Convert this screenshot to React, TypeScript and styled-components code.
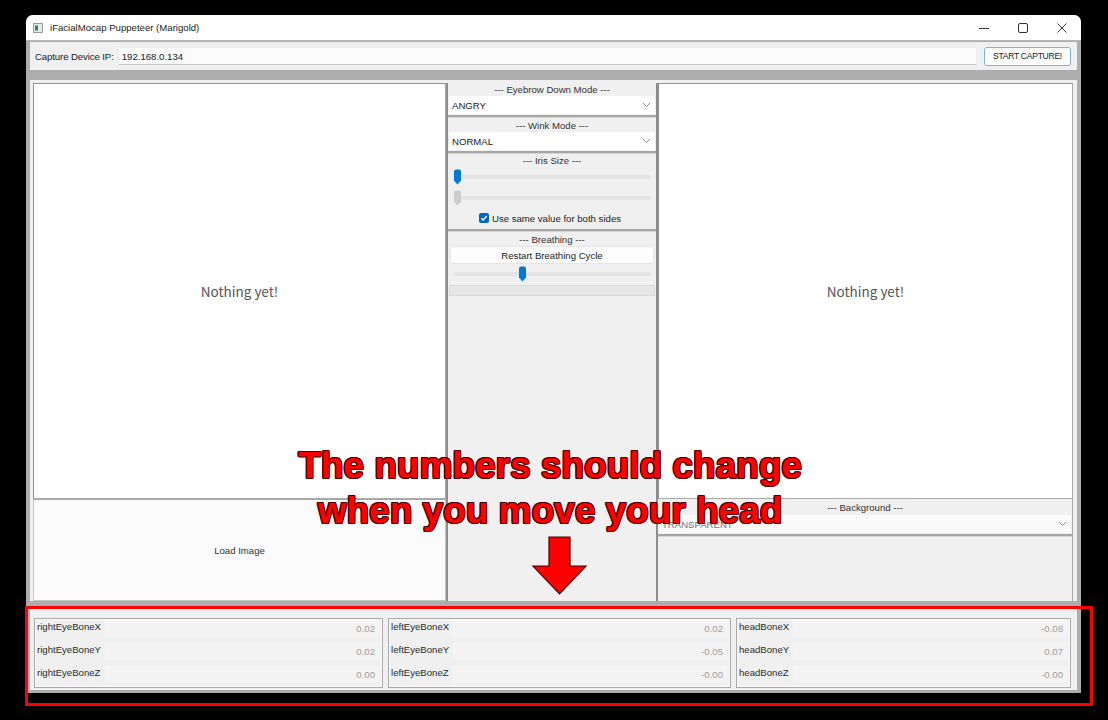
import React from "react";
import styled, { createGlobalStyle } from "styled-components";

const GlobalStyle = createGlobalStyle`
  html, body {
    margin: 0;
    padding: 0;
    background: #000;
  }
  body {
    font-family: "Liberation Sans", Arial, sans-serif;
    font-size: 9.6px;
    color: #222;
  }
  * {
    box-sizing: border-box;
  }
`;

const Page = styled.div`
  position: relative;
  width: 1108px;
  height: 720px;
  overflow: hidden;
  padding: 15px 0 0 26px;
`;

const Window = styled.div`
  width: 1055px;
  height: 678px;
  display: flex;
  flex-direction: column;
  background: #adadad;
  border-radius: 7px 7px 0 0;
  overflow: hidden;
`;

const TitleBar = styled.div`
  height: 26px;
  flex: none;
  display: flex;
  align-items: center;
  background: #fff;
  border-bottom: 1px solid #b8b8b8;
  padding-left: 7px;
`;

const TitleText = styled.span`
  margin-left: 7px;
  color: #1b1b1b;
`;

const Controls = styled.div`
  margin-left: auto;
  display: flex;
  height: 100%;
`;

const ControlButton = styled.div`
  width: 39px;
  height: 100%;
  display: flex;
  align-items: center;
  justify-content: center;
  color: #333;
`;

const Body = styled.div`
  flex: 1;
  display: flex;
  flex-direction: column;
  padding: 1px 4px 3px 4px;
`;

const Toolbar = styled.div`
  height: 28px;
  flex: none;
  display: flex;
  align-items: center;
  background: #f0f0f0;
  padding: 0 6px 0 5px;
`;

const ToolLabel = styled.span`
  color: #222;
  white-space: nowrap;
  letter-spacing: -0.1px;
`;

const IpInput = styled.div`
  flex: 1;
  height: 18px;
  margin-left: 4px;
  display: flex;
  align-items: center;
  padding-left: 3px;
  background: #fbfbfb;
  border: 1px solid #ececec;
  border-bottom-color: #c8c8c8;
  color: #1a1a1a;
`;

const CaptureButton = styled.div`
  width: 87px;
  height: 19px;
  margin-left: 7px;
  display: flex;
  align-items: center;
  justify-content: center;
  background: #fdfdfd;
  border: 1px solid #7fb2e4;
  border-radius: 3px;
  color: #222;
  font-size: 8.6px;
  letter-spacing: -0.3px;
`;

const Main = styled.div`
  margin-top: 10px;
  height: 521px;
  flex: none;
  display: grid;
  grid-template-columns: 413px 212px 1fr;
  grid-template-rows: 416px 1fr;
  background: #f0f0f0;
  padding: 3px 4px 0 3px;
`;

const Canvas = styled.div<{ $col: number }>`
  grid-column: ${(p) => p.$col};
  grid-row: 1;
  background: #fff;
  border: 1px solid #a9a9a9;
  border-top-color: #8f8f8f;
  border-left-color: #8f8f8f;
  display: flex;
  align-items: center;
  justify-content: center;
  font-family: "Noto Sans CJK JP", "Noto Sans", sans-serif;
  font-size: 13.5px;
  color: #555;
`;

const LoadImage = styled.div`
  grid-column: 1;
  grid-row: 2;
  background: #fbfbfb;
  border: 1px solid #c6c6c6;
  border-top-color: #a8a8a8;
  display: flex;
  align-items: center;
  justify-content: center;
  color: #333;
`;

const MiddleColumn = styled.div`
  grid-column: 2;
  grid-row: 1 / 3;
  display: flex;
  flex-direction: column;
  border-left: 2px solid #8d8d8d;
  border-right: 2px solid #8d8d8d;
  background: #f0f0f0;
`;

const BackgroundPanel = styled.div`
  grid-column: 3;
  grid-row: 2;
  display: flex;
  flex-direction: column;
  border-right: 1px solid #a9a9a9;
  background: #f0f0f0;
`;

const SectionHeader = styled.div<{ $h?: number }>`
  height: ${(p) => p.$h ?? 13}px;
  display: flex;
  align-items: center;
  justify-content: center;
  color: #333;
  flex: none;
`;

const Combo = styled.div<{ $light?: boolean }>`
  height: 18px;
  flex: none;
  display: flex;
  align-items: center;
  justify-content: space-between;
  padding: 0 4px 0 3px;
  background: ${(p) => (p.$light ? "#fafafa" : "#fff")};
  color: ${(p) => (p.$light ? "#777" : "#1a1a1a")};
  margin: 0 1px;
`;

const Separator = styled.div`
  height: 3px;
  flex: none;
  margin: 1px 0 0;
  background: #a6a6a6;
  border-bottom: 1px solid #d6d6d6;
`;

const SliderRow = styled.div<{ $h: number }>`
  position: relative;
  height: ${(p) => p.$h}px;
  flex: none;
  display: flex;
  align-items: center;
  padding: 0 5px 0 6px;
`;

const Track = styled.div`
  position: relative;
  flex: 1;
  height: 4px;
  border-radius: 2px;
  background: #e4e4e4;
`;

const Thumb = styled.svg`
  position: absolute;
  top: -6px;
  margin-left: -1px;
`;

const CheckRow = styled.div`
  height: 20px;
  flex: none;
  display: flex;
  align-items: center;
  justify-content: center;
  gap: 3px;
  color: #222;
  padding-right: 4px;
`;

const CheckBox = styled.div`
  width: 10px;
  height: 10px;
  border-radius: 2px;
  background: #0067c0;
  display: flex;
  align-items: center;
  justify-content: center;
`;

const FlatButton = styled.div`
  height: 18px;
  flex: none;
  margin: 0 2px;
  display: flex;
  align-items: center;
  justify-content: center;
  background: #fdfdfd;
  border: 1px solid #e6e6e6;
  border-radius: 3px;
  color: #222;
`;

const ProgressBar = styled.div`
  height: 11px;
  flex: none;
  margin: 2px 1px 0;
  background: #e6e6e6;
  border: 1px solid #d8d8d8;
`;

const Bottom = styled.div`
  margin-top: 7px;
  flex: 1;
  display: grid;
  grid-template-columns: 349px 343px 1fr;
  gap: 5px;
  background: #f0f0f0;
  padding: 10px 6px 2px 4px;
`;

const Group = styled.div`
  display: grid;
  grid-template-columns: auto 1fr;
  grid-auto-rows: 16px;
  column-gap: 4px;
  row-gap: 7px;
  padding: 1px 3px 0 2px;
  border: 1px solid #a9a9a9;
  box-shadow: inset 0 0 0 1px #fafafa;
`;

const BoneLabel = styled.div`
  display: flex;
  align-items: flex-start;
  color: #2a2a2a;
  padding-top: 1px;
`;

const BoneValue = styled.div`
  display: flex;
  align-items: center;
  justify-content: flex-end;
  padding-right: 3px;
  background: #f3f3f3;
  border: 1px solid #f6f6f6;
  color: #a0a0a0;
`;

const Callout = styled.div`
  position: absolute;
  left: 290px;
  top: 443px;
  width: 520px;
  text-align: center;
  font-family: "Liberation Sans", Arial, sans-serif;
  font-weight: 700;
  font-size: 37px;
  line-height: 45px;
  color: #ff0000;
  white-space: nowrap;
  text-shadow:
    -1px -1px 0 #4a0000, 1px -1px 0 #4a0000, -1px 1px 0 #4a0000,
    1px 1px 0 #4a0000, 0 -1px 0 #4a0000, 0 1px 0 #4a0000,
    -1px 0 0 #4a0000, 1px 0 0 #4a0000;
`;

const Arrow = styled.svg`
  position: absolute;
  left: 531px;
  top: 535px;
`;

const Highlight = styled.div`
  position: absolute;
  left: 25px;
  top: 606px;
  width: 1068px;
  height: 100px;
  border: 3px solid #ff0000;
`;

const Chevron = () => (
  <svg width="9" height="6" viewBox="0 0 9 6">
    <polyline points="1,1 4.5,4.5 8,1" fill="none" stroke="#8a8a8a" strokeWidth="1" />
  </svg>
);

const Slider = ({ value, active, h }: { value: number; active: boolean; h: number }) => (
  <SliderRow $h={h}>
    <Track>
      <Thumb width="9" height="16" viewBox="0 0 9 16" style={{ left: `${value * 100}%` }}>
        <path
          d="M1 2.5 Q1 0.5 3 0.5 H6 Q8 0.5 8 2.5 V11.5 L4.5 15.5 L1 11.5 Z"
          fill={active ? "#0078d7" : "#cccccc"}
        />
      </Thumb>
    </Track>
  </SliderRow>
);

const bones = [
  [
    ["rightEyeBoneX", "0.02"],
    ["rightEyeBoneY", "0.02"],
    ["rightEyeBoneZ", "0.00"],
  ],
  [
    ["leftEyeBoneX", "0.02"],
    ["leftEyeBoneY", "-0.05"],
    ["leftEyeBoneZ", "-0.00"],
  ],
  [
    ["headBoneX", "-0.08"],
    ["headBoneY", "0.07"],
    ["headBoneZ", "-0.00"],
  ],
];

const App = () => {
  return (
    <Page>
      <GlobalStyle />
      <Window>
        <TitleBar>
          <svg width="10" height="10" viewBox="0 0 10 10">
            <rect x="0.5" y="0.5" width="9" height="9" fill="#e8e8e8" stroke="#9a9a9a" />
            <rect x="2" y="2.5" width="3" height="5" fill="#2f7f6a" />
          </svg>
          <TitleText>iFacialMocap Puppeteer (Marigold)</TitleText>
          <Controls>
            <ControlButton>
              <svg width="10" height="10" viewBox="0 0 10 10">
                <line x1="0" y1="5.5" x2="10" y2="5.5" stroke="#333" strokeWidth="1" />
              </svg>
            </ControlButton>
            <ControlButton>
              <svg width="10" height="10" viewBox="0 0 10 10">
                <rect x="0.5" y="0.5" width="9" height="9" rx="1.5" fill="none" stroke="#333" strokeWidth="1" />
              </svg>
            </ControlButton>
            <ControlButton>
              <svg width="10" height="10" viewBox="0 0 10 10">
                <path d="M0.5 0.5 L9.5 9.5 M9.5 0.5 L0.5 9.5" stroke="#333" strokeWidth="1" />
              </svg>
            </ControlButton>
          </Controls>
        </TitleBar>
        <Body>
          <Toolbar>
            <ToolLabel>Capture Device IP:</ToolLabel>
            <IpInput>192.168.0.134</IpInput>
            <CaptureButton>START CAPTURE!</CaptureButton>
          </Toolbar>
          <Main>
            <Canvas $col={1}>Nothing yet!</Canvas>
            <LoadImage>Load Image</LoadImage>
            <MiddleColumn>
              <SectionHeader>--- Eyebrow Down Mode ---</SectionHeader>
              <Combo>
                ANGRY
                <Chevron />
              </Combo>
              <Separator />
              <SectionHeader $h={14}>--- Wink Mode ---</SectionHeader>
              <Combo>
                NORMAL
                <Chevron />
              </Combo>
              <Separator />
              <SectionHeader $h={12}>--- Iris Size ---</SectionHeader>
              <Slider value={0} active h={22} />
              <Slider value={0} active={false} h={20} />
              <CheckRow>
                <CheckBox>
                  <svg width="8" height="8" viewBox="0 0 8 8">
                    <polyline points="1.3,4.2 3.2,6 6.8,2" fill="none" stroke="#fff" strokeWidth="1.3" />
                  </svg>
                </CheckBox>
                Use same value for both sides
              </CheckRow>
              <Separator />
              <SectionHeader $h={14}>--- Breathing ---</SectionHeader>
              <FlatButton>Restart Breathing Cycle</FlatButton>
              <Slider value={0.33} active h={19} />
              <ProgressBar />
            </MiddleColumn>
            <Canvas $col={3}>Nothing yet!</Canvas>
            <BackgroundPanel>
              <SectionHeader $h={16}>--- Background ---</SectionHeader>
              <Combo $light>
                TRANSPARENT
                <Chevron />
              </Combo>
              <Separator />
            </BackgroundPanel>
          </Main>
          <Bottom>
            {bones.map((group, i) => (
              <Group key={i}>
                {group.map(([name, value]) => (
                  <React.Fragment key={name}>
                    <BoneLabel>{name}</BoneLabel>
                    <BoneValue>{value}</BoneValue>
                  </React.Fragment>
                ))}
              </Group>
            ))}
          </Bottom>
        </Body>
      </Window>
      <Callout>
        The numbers should change
        <br />
        when you move your head
      </Callout>
      <Arrow width="58" height="62" viewBox="0 0 58 62">
        <polygon
          points="18,2 39,2 39,31 55,31 28.5,59 2,31 18,31"
          fill="#ff0000"
          stroke="#4a0000"
          strokeWidth="1.2"
        />
      </Arrow>
      <Highlight />
    </Page>
  );
};

export default App;
